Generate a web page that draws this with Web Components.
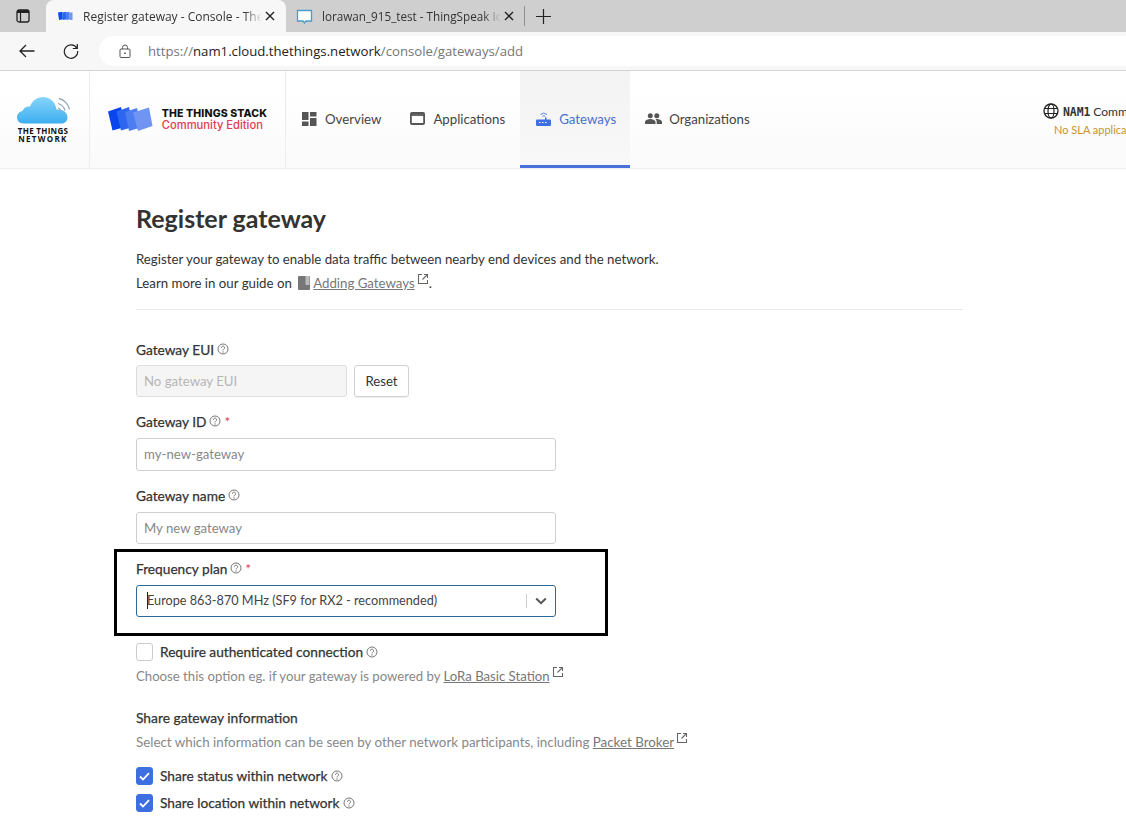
<!DOCTYPE html>
<html>
<head>
<meta charset="utf-8">
<title>Register gateway</title>
<style>
html, body { margin: 0; height: 831px; overflow: hidden; background: #fff; }
body { font-family: Lato, "Noto Sans", sans-serif; color: #333; }
</style>
</head>
<body>
<browser-bar></browser-bar>
<app-header></app-header>
<register-page></register-page>

<script>
const HELP = `<svg class="help" viewBox="0 0 12 12" width="12" height="12"><circle cx="6" cy="6" r="5" fill="none" stroke="#777" stroke-width="1"/><path d="M4.400 4.800a1.600 1.600 0 1 1 2.500 1.300c-.6.4-.9.7-.9 1.300" fill="none" stroke="#777" stroke-width="1"/><circle cx="6" cy="9" r=".7" fill="#777"/></svg>`;
const EXT = `<svg class="ext" viewBox="0 0 12 12" width="12" height="12"><path d="M5 1.500H1.500v9h9V7M7 1.500h3.500V5M10.300 1.700 5.500 6.500" fill="none" stroke="#666" stroke-width="1.100"/></svg>`;

class BrowserBar extends HTMLElement {
    constructor() {
        super();
        this._sR = this.attachShadow({mode: 'open'});
        this._sR.innerHTML = `
<style>
:host { display: block; font-family: "Open Sans", "Noto Sans", sans-serif; font-size: 12px; color: #333; }
.tabs { height: 32px; background: #cfcfcf; display: flex; align-items: flex-end; }
.side { width: 46px; height: 32px; display: flex; align-items: center; justify-content: center; flex: none; }
.tab { height: 32px; box-sizing: border-box; display: flex; align-items: center; flex: none; white-space: nowrap; overflow: hidden; }
.tab.on { width: 240px; background: #f7f7f7; border-radius: 8px 8px 0 0; padding: 0 11px 0 11px; }
.tab.off { width: 238px; padding: 0 10px 0 10px; font-size: 11.700px; }
.tab .name { flex: 1; overflow: hidden; margin-left: 9px; -webkit-mask-image: linear-gradient(90deg, #000 90%, transparent 100%); mask-image: linear-gradient(90deg, #000 90%, transparent 100%); }
.x { margin-left: 3px; flex: none; }
.sep { width: 1px; height: 20px; background: #8f8f8f; margin: 0 11px 6px 0; flex: none; }
.plus { height: 32px; display: flex; align-items: center; }
.addr { height: 38px; background: #f7f7f7; display: flex; align-items: center; border-bottom: 1px solid #d4d4d4; }
.nav { width: 44px; height: 38px; display: flex; align-items: center; justify-content: center; flex: none; }
.url { margin-left: 6px; flex: 1; height: 30px; background: #fff; border-radius: 15px 0 0 15px; display: flex; align-items: center; padding-left: 20px; font-size: 13.200px; color: #767676; white-space: nowrap; }
.url svg { margin-right: 17px; }
.url b { font-weight: 400; color: #222; }
</style>
<div class="tabs">
    <div class="side"><svg width="14" height="14" viewBox="0 0 14 14"><rect x="1" y="1" width="12" height="12" rx="2" fill="none" stroke="#222" stroke-width="1.300"/><path d="M1 2.500a1.500 1.500 0 0 1 1.500-1.500h9A1.500 1.500 0 0 1 13 2.500V4H1z" fill="#222"/><path d="M4.500 4v9" stroke="#222" stroke-width="1.200"/></svg></div>
    <div class="tab on">
        <svg width="16" height="10" viewBox="0 0 16 10" style="margin-right:1px"><path d="M1 1.500 5 .8l1 7.500-4 .8z" fill="#0d4bf0"/><path d="M5 1.500 9 .8l1 7.500-4 .8z" fill="#2a66f0"/><path d="M8.500 1.500 12 .8l1 7.500-3.500.8z" fill="#4a7ef2"/><path d="M12 1.500h3.500v7.500H13z" fill="#6e96f4"/></svg>
        <span class="name">Register gateway - Console - The Things</span>
        <svg class="x" width="10" height="10" viewBox="0 0 10 10"><path d="M1 1l8 8M9 1 1 9" stroke="#222" stroke-width="1.400"/></svg>
    </div>
    <div class="tab off">
        <svg width="17" height="17" viewBox="0 0 17 17"><path d="M1.500 2.500h14v10.500h-5.500l-1.500 2-1.500-2h-5.500z" fill="#fff" stroke="#4e9ac9" stroke-width="1.300"/></svg>
        <span class="name">lorawan_915_test - ThingSpeak IoT</span>
        <svg class="x" width="10" height="10" viewBox="0 0 10 10"><path d="M1 1l8 8M9 1 1 9" stroke="#222" stroke-width="1.400"/></svg>
    </div>
    <div class="sep"></div>
    <div class="plus"><svg width="15" height="15" viewBox="0 0 15 15"><path d="M7.500 0v15M0 7.500h15" stroke="#222" stroke-width="1.200"/></svg></div>
</div>
<div class="addr">
    <div class="nav" style="margin-left:5px"><svg width="16" height="14" viewBox="0 0 16 14"><path d="M15.500 7H1M7 1 1 7l6 6" fill="none" stroke="#222" stroke-width="1.300"/></svg></div>
    <div class="nav"><svg width="16" height="16" viewBox="0 0 16 16"><path d="M13.800 5.200A6.700 6.700 0 1 0 14.700 8M14.300 1v4.500H9.800" fill="none" stroke="#222" stroke-width="1.200"/></svg></div>
    <div class="url">
        <svg width="12" height="14" viewBox="0 0 12 14"><rect x="1" y="5" width="10" height="8.500" rx="1" fill="none" stroke="#555" stroke-width="1"/><path d="M3.500 5V3.500a2.500 2.500 0 0 1 5 0V5" fill="none" stroke="#555"/><circle cx="6" cy="9.200" r=".9" fill="#555"/></svg>
        <span>https://<b>nam1.cloud.thethings.network</b>/console/gateways/add</span>
    </div>
</div>`;
    }
}
window.customElements.define('browser-bar', BrowserBar);

class NavItem extends HTMLElement {
    constructor() {
        super();
        this._sR = this.attachShadow({mode: 'open'});
        this._sR.innerHTML = `
<style>
:host { display: flex; align-items: center; box-sizing: border-box; height: 97px; padding: 0 14px 2px 16px; gap: 8px; font-size: 13.250px; color: #444; flex: none; }
:host([active]) { color: #4a6fd0; background: linear-gradient(#f3f3f3, #f8f8f8); border-bottom: 3px solid #4a70dc; padding-top: 3px; }
::slotted(svg) { flex: none; }
</style>
<slot name="icon"></slot><slot></slot>`;
    }
}
window.customElements.define('nav-item', NavItem);

class AppHeader extends HTMLElement {
    constructor() {
        super();
        this._sR = this.attachShadow({mode: 'open'});
        this._sR.innerHTML = `
<style>
:host { display: block; height: 98px; box-sizing: border-box; border-bottom: 1px solid #eee; background: linear-gradient(#fff 20%, #fafafa); overflow: hidden; }
.row { display: flex; align-items: stretch; height: 97px; white-space: nowrap; }
.brand { display: flex; align-items: center; justify-content: center; border-right: 1px solid #ececec; flex: none; }
.ttn { width: 90px; flex-direction: column; padding-right: 3px; box-sizing: border-box; }
.ttn span { font: 700 8px/8px "Open Sans", sans-serif; color: #111; text-align: center; letter-spacing: .3px; display: block; }
.ttn span span { letter-spacing: 1.300px; }
.tts { width: 195px; gap: 9px; }
.tts b { display: block; font: 800 10.500px/12px "Inter", sans-serif; letter-spacing: .15px; color: #111; }
.tts i { display: block; font: 500 11.200px/11px "Inter", sans-serif; color: #e0404e; }
.nav { display: flex; }
.cluster { margin-left: auto; width: 83px; flex: none; overflow: hidden; display: flex; flex-direction: column; padding-top: 32px; box-sizing: border-box; }
.cluster .top { display: flex; align-items: center; gap: 4px; font-size: 12px; color: #333; }
.cluster .top b { font-weight: 700; font-size: 11.500px; font-family: "DejaVu Sans Mono", monospace; letter-spacing: -.1px; }
.cluster .sla { font-size: 11px; color: #c8922c; margin-top: 4px; padding-left: 11px; }
</style>
<div class="row">
    <div class="brand ttn">
        <svg width="53" height="27" viewBox="0 0 53 27"><defs><linearGradient id="c" x1="0" y1="0" x2="0" y2="1"><stop offset="0" stop-color="#86d4f9"/><stop offset="1" stop-color="#3eaef0"/></linearGradient></defs><path d="M6.500 26.500C2.500 26.500 0 23.500 0 20.500c0-3.500 2.500-6 5.500-6.500C6.500 11 9.500 9 13 9.500 15.500 3.500 20 0 26 0c7 0 12.500 5 13.500 12.500C47 12.500 50.500 16 50.500 20.500c0 3.500-2.500 6-6 6z" fill="url(#c)"/><path d="M41 6.500c3.500 1 6 3.500 7 7M42 1.500c5 1.200 9.500 5.500 10.500 11M41 11c1.500.5 2.500 1.500 3 3" fill="none" stroke="#8fa7b3" stroke-width="1.300"/></svg>
        <span style="margin-top:3px">THE THINGS<br><span>NETWORK</span></span>
    </div>
    <div class="brand tts">
        <svg width="45" height="25" viewBox="0 0 45 25"><path d="M0 4.500 13 0l4 20-12.500 3.500z" fill="#0a46ee"/><path d="M8.500 4.500 21 0l4 20-12 3.500z" fill="#2d66f0"/><path d="M17 5 29 1l4 19.500-12 3.500z" fill="#4c7ef2"/><path d="M25 5.500 41 .5 44.500 19 30 24z" fill="#6f94f4"/></svg>
        <div><b>THE THINGS STACK</b><i>Community Edition</i></div>
    </div>
    <div class="nav">
        <nav-item><svg slot="icon" width="15" height="14" viewBox="0 0 15 14"><path d="M0 0h6.500v8H0zM0 9.500h6.500V14H0zM8 0h6.500v4.500H8zM8 6h6.500v8H8z" fill="#555"/></svg>Overview</nav-item>
        <nav-item style="padding-left:15px;padding-right:15px"><svg slot="icon" width="15" height="13" viewBox="0 0 15 13"><rect x=".9" y="1" width="13.200" height="11" rx="1" fill="none" stroke="#555" stroke-width="1.800"/><path d="M1 3h13" stroke="#555" stroke-width="1.800"/></svg>Applications</nav-item>
        <nav-item active><svg slot="icon" width="15" height="15" viewBox="0 0 15 15"><path d="M0 9.500a1 1 0 0 1 1-1h8V6.500h1.500v2H14a1 1 0 0 1 1 1V14a1 1 0 0 1-1 1H1a1 1 0 0 1-1-1z" fill="#3f6fe0"/><path d="M4.500 3.500a5 5 0 0 1 6.500 0M6.300 5.300a2.500 2.500 0 0 1 3 0" fill="none" stroke="#5c82e2" stroke-width="1"/><path d="M3 11.500h1.500M6 11.500h1.500M9 11.500h1.500" stroke="#fff" stroke-width="1.200"/></svg>Gateways</nav-item>
        <nav-item style="padding-left:15px;gap:7px"><svg slot="icon" width="17" height="11" viewBox="0 0 17 11"><circle cx="5.300" cy="2.800" r="2.500" fill="#555"/><circle cx="11.800" cy="2.800" r="2.500" fill="#555"/><path d="M0 11V9c0-2 3.500-3 5.300-3s5.200 1 5.200 3v2zM11.700 11V9c0-1.200-.5-2.200-1.500-2.900.6-.1 1.200-.1 1.600-.1 1.800 0 5.200 1 5.200 3v2z" fill="#555"/></svg>Organizations</nav-item>
    </div>
    <div class="cluster">
        <div class="top"><svg style="flex:none" width="16" height="16" viewBox="0 0 16 16"><circle cx="8" cy="8" r="7" fill="none" stroke="#222" stroke-width="1.300"/><ellipse cx="8" cy="8" rx="3" ry="7" fill="none" stroke="#222" stroke-width="1.200"/><path d="M1.500 5.500h13M1.500 10.500h13" stroke="#222" stroke-width="1.200"/></svg><span><b>NAM1</b> Community</span></div>
        <div class="sla">No SLA applicable</div>
    </div>
</div>`;
    }
}
window.customElements.define('app-header', AppHeader);

class FormField extends HTMLElement {
    constructor() {
        super();
        this._sR = this.attachShadow({mode: 'open'});
        this._sR.innerHTML = `
<style>
:host { display: block; }
.lab { box-sizing: border-box; height: 20px; padding-bottom: 2px; display: flex; align-items: center; gap: 3px; font-size: 13.700px; color: #333; margin-bottom: 6px; -webkit-text-stroke: .25px #333; }
:host([first]) .lab { padding-bottom: 0; }
.star { color: #e0394a; -webkit-text-stroke: 0; }
.star[hidden] { display: none; }
.help { display: block; }
</style>
<div class="lab"><span class="t"></span>${HELP}<span class="star" hidden>*</span></div>
<slot></slot>`;
    }
    connectedCallback() {
        this._sR.querySelector('.t').textContent = this.getAttribute('label');
        this._sR.querySelector('.star').hidden = !this.hasAttribute('required');
    }
}
window.customElements.define('form-field', FormField);

class TextBox extends HTMLElement {
    constructor() {
        super();
        this._sR = this.attachShadow({mode: 'open'});
        this._sR.innerHTML = `
<style>
:host { display: flex; align-items: center; box-sizing: border-box; width: 420px; height: 33px; border: 1px solid #cfcfcf; border-radius: 3px; padding: 0 7px 2px; font-size: 13.200px; color: #888; background: #fff; }
:host([disabled]) { width: 211px; height: 32px; padding-bottom: 0; background: #f5f5f5; border-color: #ddd; color: #b5b5b5; }
:host([short]) { height: 32px; padding-bottom: 0; }
</style>
<slot></slot>`;
    }
}
window.customElements.define('text-box', TextBox);

class SelectBox extends HTMLElement {
    constructor() {
        super();
        this._sR = this.attachShadow({mode: 'open'});
        this._sR.innerHTML = `
<style>
:host { display: flex; align-items: center; box-sizing: border-box; width: 420px; height: 32px; border: 1px solid #2b6a97; border-radius: 3px; font-size: 12.700px; color: #444; background: #fff; }
.val { flex: 1; padding-left: 10px; padding-bottom: 2px; position: relative; white-space: nowrap; }
.val::before { content: ''; position: absolute; left: 10px; top: 0; bottom: 1px; width: 1px; background: #222; }
.bar { width: 1px; height: 14px; background: #ccc; }
.arrow { width: 28px; display: flex; justify-content: center; }
</style>
<div class="val"><slot></slot></div>
<div class="bar"></div>
<div class="arrow"><svg width="12" height="8" viewBox="0 0 12 8"><path d="M1.200 1.500 6 6.200l4.800-4.700" fill="none" stroke="#555" stroke-width="2"/></svg></div>`;
    }
}
window.customElements.define('select-box', SelectBox);

class CheckRow extends HTMLElement {
    constructor() {
        super();
        this._sR = this.attachShadow({mode: 'open'});
        this._sR.innerHTML = `
<style>
:host { display: flex; align-items: center; gap: 7px; height: 18px; font-size: 13.700px; color: #333; -webkit-text-stroke: .25px #333; }
.box { box-sizing: border-box; width: 17px; height: 18px; border: 1px solid #ccc; border-radius: 3px; background: #fff; flex: none; display: flex; align-items: center; justify-content: center; }
:host([checked]) .box { background: #3d6fe0; border-color: #3d6fe0; }
svg.tick { display: none; }
:host([checked]) svg.tick { display: block; }
span { position: relative; top: -1px; }
.help { margin-left: -4px; }
</style>
<div class="box"><svg class="tick" width="11" height="9" viewBox="0 0 11 9"><path d="M1 4.500 4 7.500 10 1.200" fill="none" stroke="#fff" stroke-width="1.800"/></svg></div>
<span><slot></slot></span>${HELP}`;
    }
}
window.customElements.define('check-row', CheckRow);

class RegisterPage extends HTMLElement {
    constructor() {
        super();
        this._sR = this.attachShadow({mode: 'open'});
        this._sR.innerHTML = `
<style>
:host { display: block; position: relative; padding: 31px 0 0 136px; width: 827px; font-size: 13.250px; color: #333; }
h1 { margin: 0; font-size: 25px; line-height: 36px; font-weight: 700; color: #333; }
.intro { margin: 11px 0 0; line-height: 24px; padding-bottom: 14px; border-bottom: 1px solid #e8e8e8; }
a { color: #777; text-decoration: underline; }
.ext { margin-left: 2px; vertical-align: 3px; }
.book { vertical-align: -2px; margin-left: 3px; }
.fields { display: flex; flex-direction: column; margin-top: 29px; }
.eui { display: flex; gap: 7px; }
.reset { box-sizing: border-box; width: 55px; height: 32px; border: 1px solid #d2d2d2; border-radius: 3px; font-size: 13.200px; color: #333; display: flex; align-items: center; justify-content: center; box-shadow: 0 1px 1px #eee; }
form-field { margin-bottom: 15px; }
.note { color: #888; line-height: 20px; font-size: 13.350px; }
.head { font-size: 13.800px; line-height: 20px; margin-top: 22px; -webkit-text-stroke: .25px #333; }
.checks { display: flex; flex-direction: column; gap: 9px; margin-top: 15px; }
.mark { position: absolute; left: 114px; top: 380px; width: 494px; height: 87px; box-sizing: border-box; border: 3px solid #000; }
</style>
<h1>Register gateway</h1>
<p class="intro">Register your gateway to enable data traffic between nearby end devices and the network.<br>Learn more in our guide on <svg class="book" width="12" height="14" viewBox="0 0 12 14"><path d="M0 1a1 1 0 0 1 1-1h10a1 1 0 0 1 1 1v12a1 1 0 0 1-1 1H1a1 1 0 0 1-1-1z" fill="#777"/><path d="M7.500 0h4v9h-4z" fill="#bbb"/></svg> <a href="#">Adding Gateways</a>${EXT}.</p>
<div class="fields">
    <form-field first label="Gateway EUI"><div class="eui"><text-box disabled>No gateway EUI</text-box><div class="reset">Reset</div></div></form-field>
    <form-field label="Gateway ID" required><text-box>my-new-gateway</text-box></form-field>
    <form-field label="Gateway name"><text-box short>My new gateway</text-box></form-field>
    <form-field label="Frequency plan" required><select-box>Europe 863-870 MHz (SF9 for RX2 - recommended)</select-box></form-field>
    <check-row style="margin-top:11px">Require authenticated connection</check-row>
    <div class="note" style="margin-top:5px;font-size:13.180px">Choose this option eg. if your gateway is powered by <a href="#">LoRa Basic Station</a>${EXT}</div>
    <div class="head">Share gateway information</div>
    <div class="note" style="margin-top:4px">Select which information can be seen by other network participants, including <a href="#">Packet Broker</a>${EXT}</div>
    <div class="checks">
        <check-row checked>Share status within network</check-row>
        <check-row checked>Share location within network</check-row>
    </div>
</div>
<div class="mark"></div>`;
    }
}
window.customElements.define('register-page', RegisterPage);
</script>
</body>
</html>
